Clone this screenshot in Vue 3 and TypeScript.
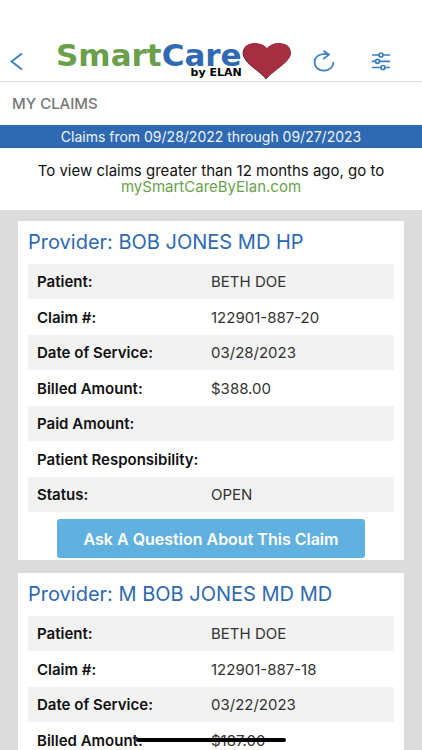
<script setup lang="ts">
interface Claim {
  provider: string
  patient: string
  claimNumber: string
  serviceDate: string
  billed: string
  paid: string
  responsibility: string
  status: string
}

const claims: Claim[] = [
  {
    provider: 'BOB JONES MD HP',
    patient: 'BETH DOE',
    claimNumber: '122901-887-20',
    serviceDate: '03/28/2023',
    billed: '$388.00',
    paid: '',
    responsibility: '',
    status: 'OPEN',
  },
  {
    provider: 'M BOB JONES MD MD',
    patient: 'BETH DOE',
    claimNumber: '122901-887-18',
    serviceDate: '03/22/2023',
    billed: '$187.00',
    paid: '',
    responsibility: '',
    status: 'OPEN',
  },
]

const fields: { label: string; key: keyof Claim }[] = [
  { label: 'Patient:', key: 'patient' },
  { label: 'Claim #:', key: 'claimNumber' },
  { label: 'Date of Service:', key: 'serviceDate' },
  { label: 'Billed Amount:', key: 'billed' },
  { label: 'Paid Amount:', key: 'paid' },
  { label: 'Patient Responsibility:', key: 'responsibility' },
  { label: 'Status:', key: 'status' },
]
</script>

<template>
  <div class="screen">
    <header class="topbar">
      <button class="icon-button back" type="button" aria-label="Back">
        <svg width="14" height="20" viewBox="0 0 14 20">
          <path d="M12 2.500 1.500 10.500 12 18.500" />
        </svg>
      </button>
      <div class="logo">
        <div class="wordmark">
          <span class="name"><span class="smart">Smart</span><span class="care">Care</span></span>
          <span class="by">by ELAN</span>
        </div>
        <svg class="heart" width="50" height="38" viewBox="0 0 50 38" aria-hidden="true">
          <path class="heart-shade" d="M24 37.500C18 29.500 1 21 .6 11.500C.6 5 5.500 1.500 12.500 1.500C18 1.500 22.500 4 24.500 7C27 3.500 31 1.500 36.500 1.500C43.500 1.500 48.500 5 48.500 11.500C48.500 20 32 28 24 37.500Z" />
          <path class="heart-face" d="M24.500 36.800C18.500 29 1.600 20.500 1.400 11C1.400 4.500 6 1 12.500 1C18.500 1 23 3.300 25 6.300C27.500 3 31.500 1 37 1C44 1 49 4.500 49 11C49 19.500 32.500 27.500 24.500 36.800Z" />
        </svg>
      </div>
      <button class="icon-button refresh" type="button" aria-label="Refresh">
        <svg width="22" height="22" viewBox="0 0 22 22">
          <path d="M20.500 12C20.500 17 16.500 20.700 11 20.700S1.500 17 1.500 12.200C1.500 7.500 5.500 4.100 10.400 4.100H15.500M10.500 .800 16 4.600 10.200 9" />
        </svg>
      </button>
      <button class="icon-button filter" type="button" aria-label="Filter claims">
        <svg width="18" height="20" viewBox="0 0 18 20">
          <path d="M0 4H6.800M11.200 4H18M0 10.300H3.300M7.700 10.300H18M0 16.500H8.800M13.200 16.500H18" />
          <circle cx="9" cy="4" r="2" />
          <circle cx="5.500" cy="10.300" r="2" />
          <circle cx="11" cy="16.500" r="2" />
        </svg>
      </button>
    </header>

    <h1 class="title">MY CLAIMS</h1>
    <p class="range">Claims from 09/28/2022 through 09/27/2023</p>
    <p class="notice">
      To view claims greater than 12 months ago, go to<br />
      <a href="#">mySmartCareByElan.com</a>
    </p>

    <main class="claims">
      <article v-for="claim in claims" :key="claim.claimNumber" class="card">
        <h2>Provider: {{ claim.provider }}</h2>
        <table>
          <tbody>
            <tr v-for="field in fields" :key="field.key">
              <th scope="row">{{ field.label }}</th>
              <td>{{ claim[field.key] }}</td>
            </tr>
          </tbody>
        </table>
        <button class="ask" type="button">Ask A Question About This Claim</button>
      </article>
    </main>
    <div class="home-indicator"></div>
  </div>
</template>

<style>
body {
  margin: 0;
}
</style>

<style scoped>
.screen {
  display: flex;
  flex-direction: column;
  height: 100vh;
  overflow: hidden;
  background: #fff;
  color: #111;
  font-family: Inter, 'Liberation Sans', sans-serif;
  font-size: 15px;
}

.topbar {
  display: flex;
  flex: none;
  align-items: center;
  height: 41px;
  padding: 40px 32px 0 10px;
  border-bottom: 1px solid #dcdcdc;
}

.icon-button {
  display: flex;
  padding: 0;
  border: 0;
  background: none;
}

.icon-button svg {
  fill: none;
  stroke: #3a7fc1;
  stroke-width: 1.7;
}

.back svg {
  stroke-width: 2;
}

.logo {
  display: flex;
  align-items: center;
  margin: 0 auto 0 32px;
}

.wordmark {
  display: flex;
  flex-direction: column;
  align-items: flex-end;
  font-family: 'DejaVu Sans', sans-serif;
  font-weight: 700;
}

.name {
  font-size: 31px;
  line-height: 24px;
}

.smart {
  color: #6a9f4b;
}

.care {
  color: #2f69b1;
}

.by {
  color: #000;
  font-size: 11px;
  line-height: 12px;
}

.heart-shade {
  fill: #65242f;
}

.heart-face {
  fill: #a52f40;
}

.filter {
  margin-left: 37px;
}

.title {
  flex: none;
  margin: 0;
  padding: 0 12px;
  color: #777;
  font-size: 15px;
  font-weight: 500;
  line-height: 43px;
}

.range {
  flex: none;
  margin: 0;
  background: #2f69b1;
  color: #eef4fb;
  font-size: 14px;
  line-height: 23px;
  text-align: center;
}

.notice {
  flex: none;
  margin: 0;
  padding: 15px 12px;
  line-height: 16px;
  text-align: center;
}

.notice a {
  color: #6a9f4b;
  text-decoration: none;
}

.claims {
  display: flex;
  flex: 1;
  flex-direction: column;
  gap: 13px;
  min-height: 0;
  padding: 11px 18px;
  overflow-y: auto;
  background: #dcdcdc;
  scrollbar-width: none;
}

.card {
  display: flex;
  flex: none;
  flex-direction: column;
  padding: 0 10px 2px;
  background: #fff;
}

h2 {
  margin: 0;
  color: #2f69b1;
  font-size: 20px;
  font-weight: 400;
  line-height: 43px;
}

table {
  width: 100%;
  border-collapse: collapse;
  table-layout: fixed;
}

tr {
  height: 36px;
}

tr:nth-child(odd) {
  height: 35px;
  background: #f2f2f2;
}

th,
td {
  padding: 0;
  text-align: left;
}

th {
  padding-left: 9px;
  font-weight: 600;
  white-space: nowrap;
}

td {
  color: #333;
}

.ask {
  align-self: center;
  width: 84%;
  height: 39px;
  margin-top: 7px;
  padding: 0;
  border: 0;
  border-radius: 3px;
  background: #60b0e0;
  color: #fff;
  font-family: inherit;
  font-size: 16px;
  font-weight: 600;
}

.home-indicator {
  position: fixed;
  bottom: 8px;
  left: 50%;
  width: 150px;
  height: 4px;
  border-radius: 2px;
  background: #000;
  transform: translateX(-50%);
}
</style>
